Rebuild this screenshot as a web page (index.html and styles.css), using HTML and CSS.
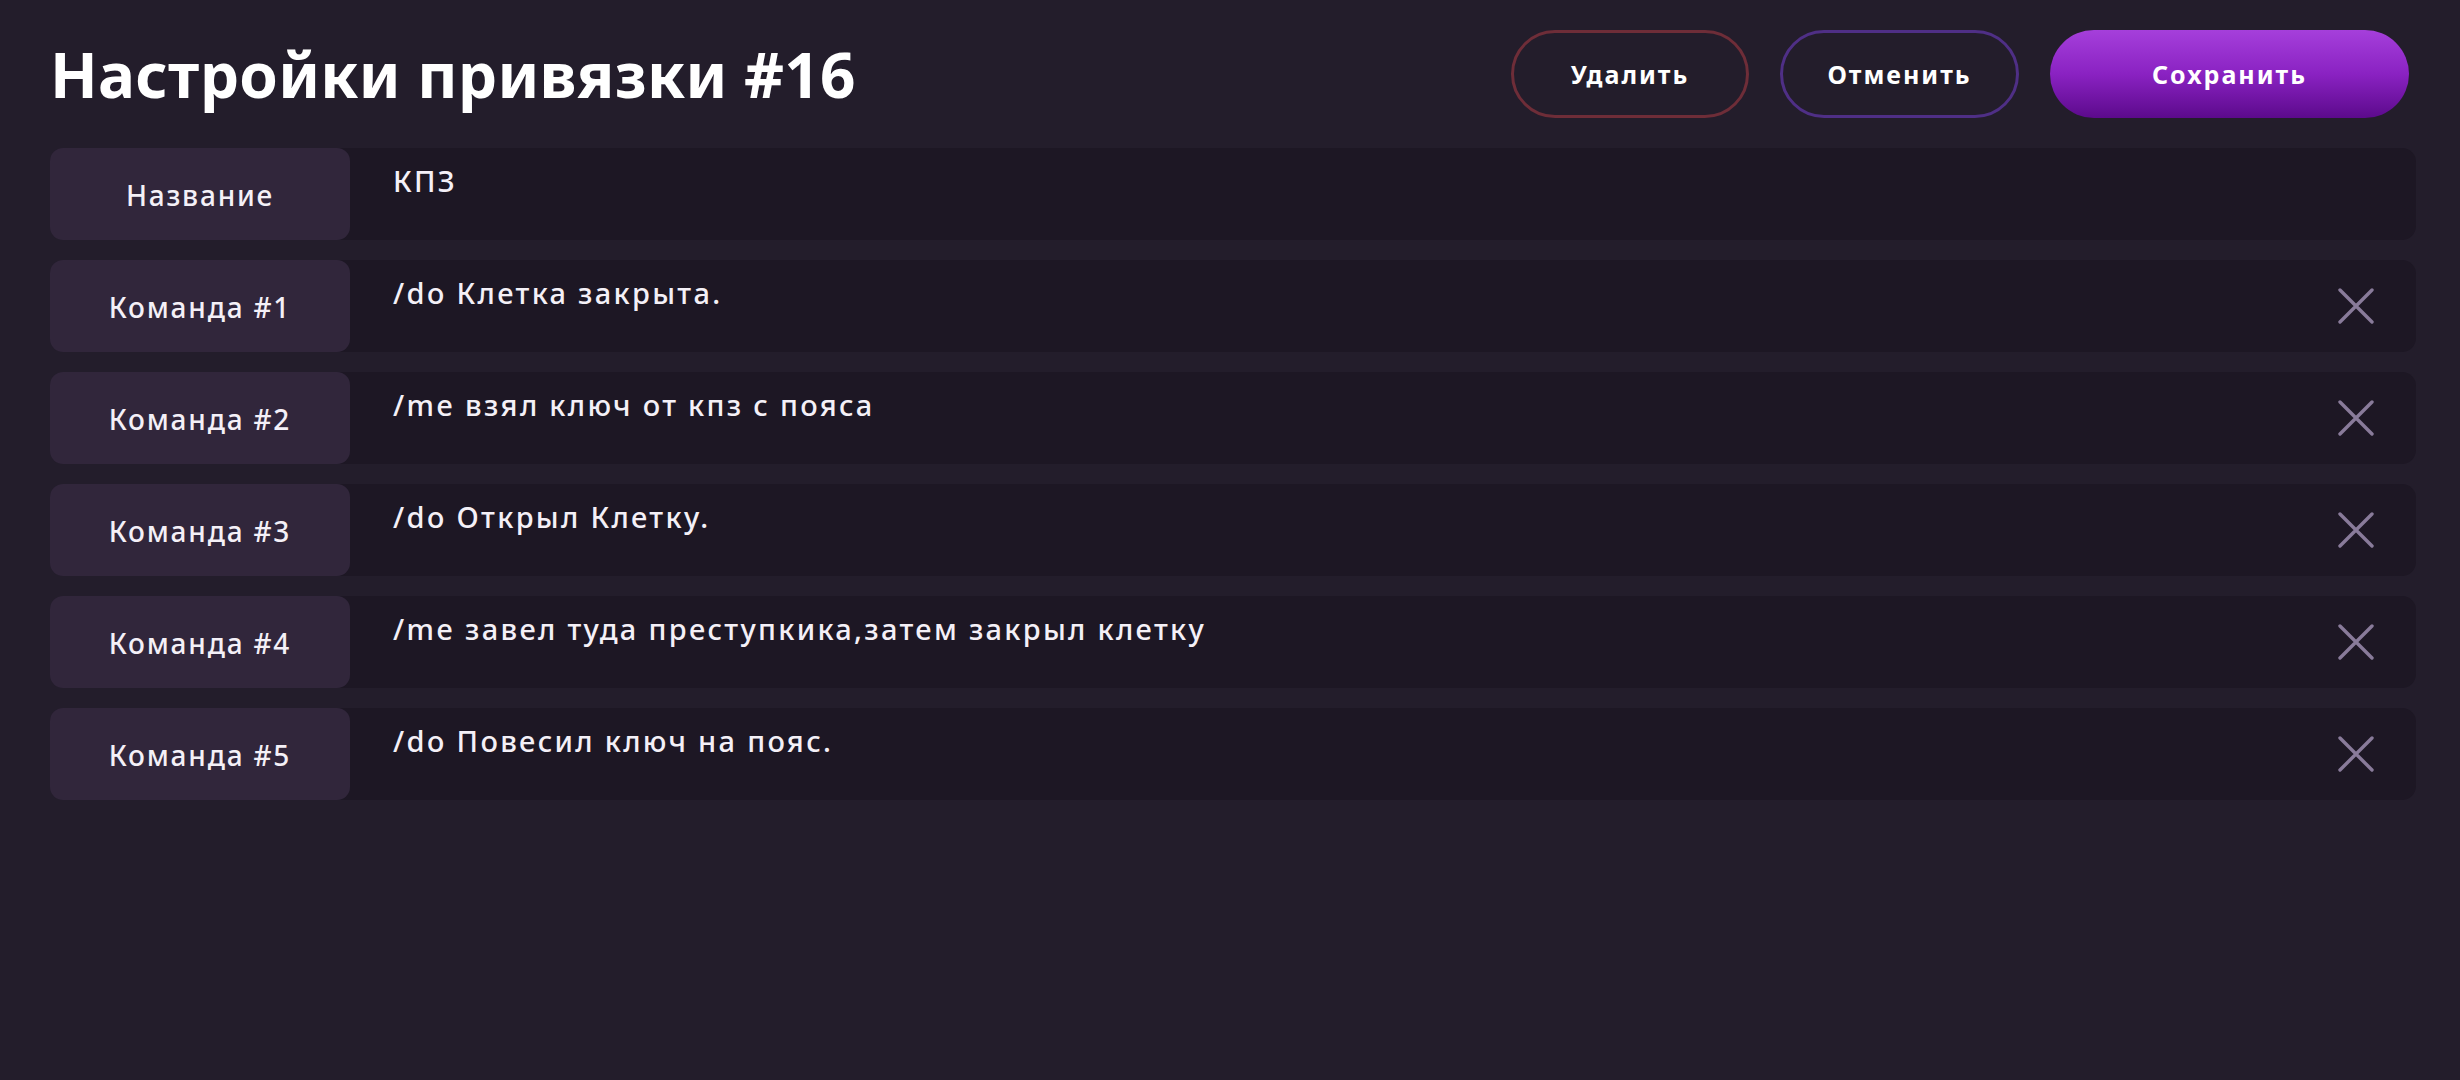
FILE: index.html
```html
<!DOCTYPE html>
<html lang="ru">
<head>
<meta charset="utf-8">
<title>Настройки привязки #16</title>
<link rel="stylesheet" href="styles.css">
</head>
<body>
<div class="page">
  <header class="top">
    <h1 class="title">Настройки привязки #16</h1>
    <div class="actions">
      <button class="btn btn-delete">Удалить</button>
      <button class="btn btn-cancel">Отменить</button>
      <button class="btn btn-save">Сохранить</button>
    </div>
  </header>
  <div class="rows">
    <div class="row">
      <div class="label">Название</div>
      <div class="value">КПЗ</div>
    </div>
    <div class="row">
      <div class="label">Команда #1</div>
      <div class="value">/do Клетка закрыта.</div>
      <button class="remove" aria-label="Удалить"><svg viewBox="0 0 36 36" width="36" height="36"><path d="M2 2 L34 34 M34 2 L2 34" /></svg></button>
    </div>
    <div class="row">
      <div class="label">Команда #2</div>
      <div class="value">/me взял ключ от кпз с пояса</div>
      <button class="remove" aria-label="Удалить"><svg viewBox="0 0 36 36" width="36" height="36"><path d="M2 2 L34 34 M34 2 L2 34" /></svg></button>
    </div>
    <div class="row">
      <div class="label">Команда #3</div>
      <div class="value">/do Открыл Клетку.</div>
      <button class="remove" aria-label="Удалить"><svg viewBox="0 0 36 36" width="36" height="36"><path d="M2 2 L34 34 M34 2 L2 34" /></svg></button>
    </div>
    <div class="row">
      <div class="label">Команда #4</div>
      <div class="value">/me завел туда преступкика,затем закрыл клетку</div>
      <button class="remove" aria-label="Удалить"><svg viewBox="0 0 36 36" width="36" height="36"><path d="M2 2 L34 34 M34 2 L2 34" /></svg></button>
    </div>
    <div class="row">
      <div class="label">Команда #5</div>
      <div class="value">/do Повесил ключ на пояс.</div>
      <button class="remove" aria-label="Удалить"><svg viewBox="0 0 36 36" width="36" height="36"><path d="M2 2 L34 34 M34 2 L2 34" /></svg></button>
    </div>
  </div>
</div>
</body>
</html>
```
FILE: styles.css
```css
* { box-sizing: border-box; }
html, body {
  margin: 0;
  padding: 0;
  background: #231d2b;
  color: #ffffff;
  font-family: "Noto Sans", "Open Sans", sans-serif;
}
body { min-height: 1080px; }
.page {
  padding: 30px 44px 0 50px;
}
.top {
  display: flex;
  align-items: center;
  justify-content: space-between;
  height: 88px;
  margin-bottom: 30px;
}
.title {
  margin: 0;
  font-size: 62px;
  font-weight: 700;
  line-height: 1;
  letter-spacing: 0.3px;
  color: #ffffff;
}
.actions {
  display: flex;
  gap: 31px;
  margin-right: 7px;
}
.btn {
  height: 88px;
  border-radius: 44px;
  font-family: inherit;
  font-size: 25px;
  font-weight: 700;
  color: #ffffff;
  background: transparent;
  cursor: pointer;
  letter-spacing: 2px;
}
.btn-delete {
  width: 238px;
  border: 3px solid #6e2d38;
}
.btn-cancel {
  width: 239px;
  border: 3px solid #4f2f86;
}
.btn-save {
  width: 359px;
  border: none;
  background: linear-gradient(180deg, #a53fdb 0%, #8a22c2 50%, #5c0a8c 100%);
}
.rows {
  display: flex;
  flex-direction: column;
  gap: 20px;
}
.row {
  display: flex;
  align-items: stretch;
  height: 92px;
  background: #1d1724;
  border-radius: 14px;
}
.label {
  flex: 0 0 300px;
  display: flex;
  align-items: center;
  justify-content: center;
  background: #31263b;
  border-radius: 13px;
  font-size: 28px;
  font-weight: 500;
  letter-spacing: 1.8px;
  color: #f4f0f7;
  padding-top: 2px;
}
.value {
  flex: 1;
  padding: 13px 0 0 43px;
  font-size: 29px;
  font-weight: 500;
  letter-spacing: 2.3px;
  color: #f4f0f7;
}
.remove {
  align-self: center;
  width: 36px;
  height: 36px;
  margin-right: 42px;
  padding: 0;
  border: none;
  background: transparent;
  cursor: pointer;
}
.remove svg {
  display: block;
  stroke: #897b9a;
  stroke-width: 3.4;
  stroke-linecap: round;
  fill: none;
}
```
